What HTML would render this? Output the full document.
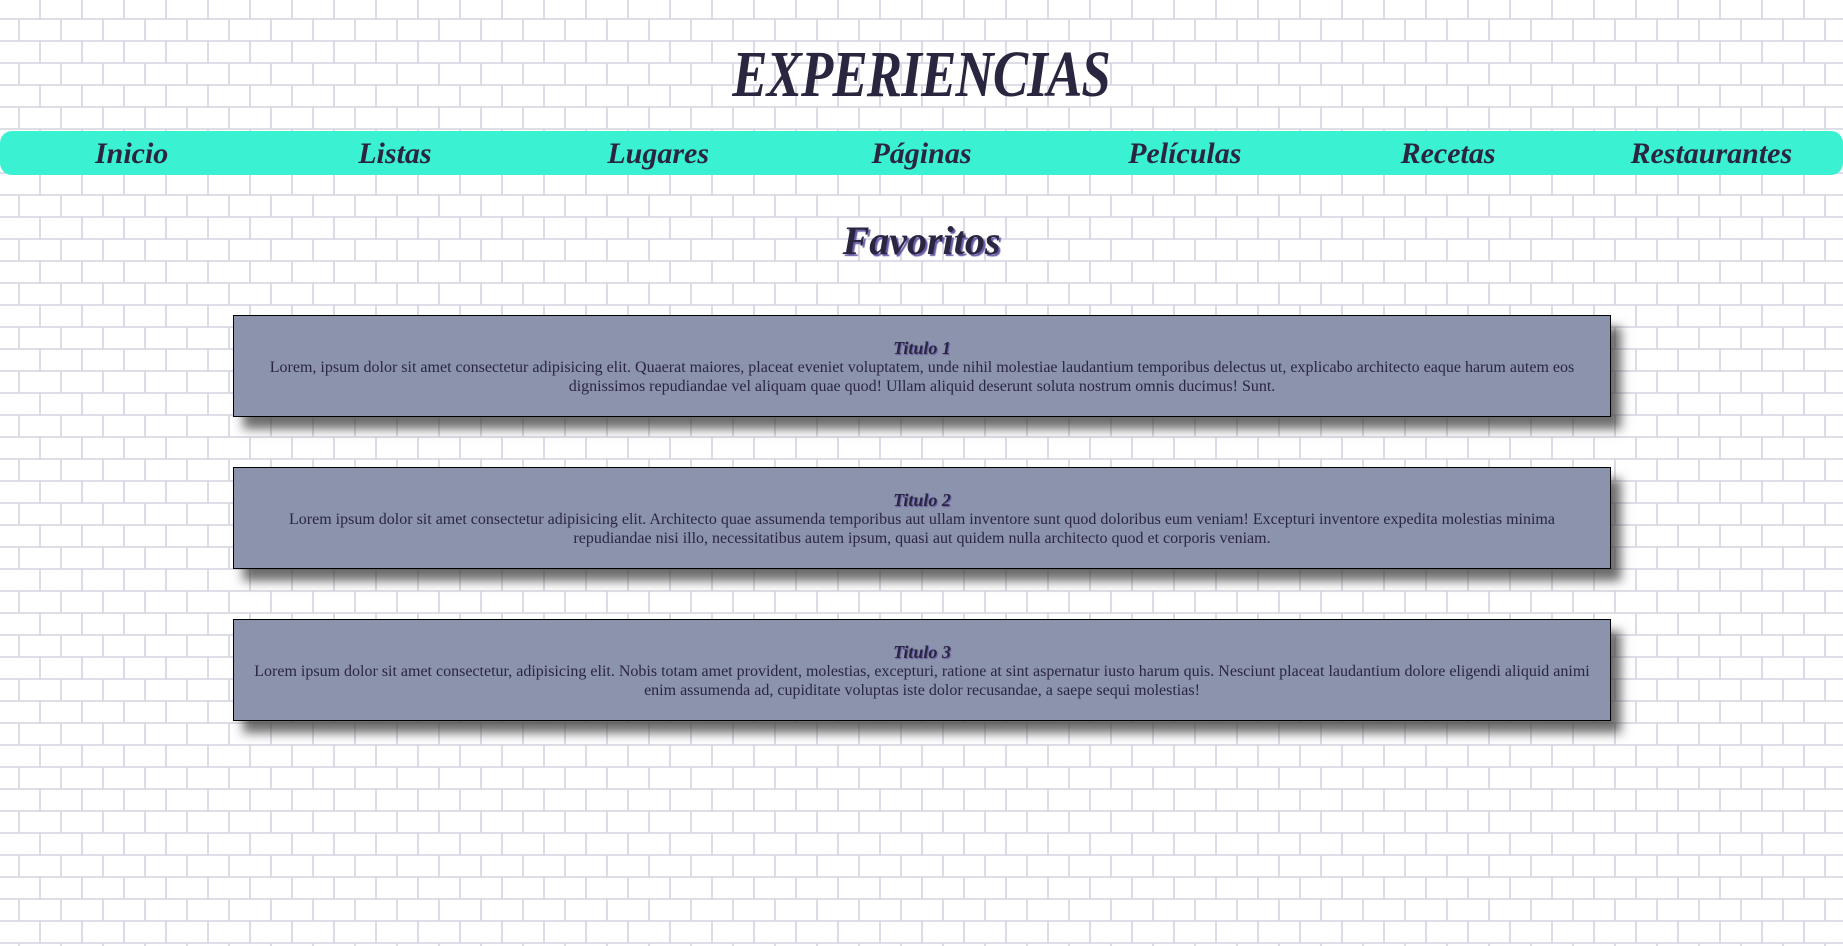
<!DOCTYPE html>
<html><head><meta charset="utf-8"><style>
html,body{margin:0;padding:0;width:1843px;height:946px;overflow:hidden;background:#fff;}
#bg{position:absolute;left:0;top:0;z-index:0}
.wrap{position:relative;z-index:1}
h1{margin:0;position:absolute;top:40px;left:0;width:1843px;text-align:center;font:italic bold 66px/70px "Liberation Serif",serif;color:#2a2640;}
h1 span{display:inline-block;transform:scaleX(0.8);letter-spacing:-1px}
nav{position:absolute;top:131px;left:0;width:1843px;height:44px;background:#3af2d2;border-radius:12px;display:flex}
nav a{flex:1;text-align:center;font:italic bold 30px/46px "Liberation Serif",serif;color:#2a2640;text-decoration:none}
h2{margin:0;position:absolute;top:216px;left:0;width:1843px;text-align:center;font:italic bold 40px/50px "Liberation Serif",serif;color:#2a2640;text-shadow:2px 2px 1px #6a5aa8}
.card{position:absolute;left:233px;width:1378px;height:102px;background:#8c93ad;border:1px solid #000;box-shadow:10px 12px 10px rgba(60,60,60,.75);text-align:center;font:16px/19px "Liberation Serif",serif;color:#2a2640;box-sizing:border-box;padding:22px 16px 0}
.card b{display:block;font:italic bold 18px/20px "Liberation Serif",serif;text-shadow:1px 1px 1px #6a5aa8}
</style></head><body>
<svg id="bg" width="1843" height="946"><defs><pattern id="p" width="42" height="44" patternUnits="userSpaceOnUse">
<g stroke="#d3d4e0" stroke-width="1.6"><line x1="0" y1="19" x2="42" y2="19"/><line x1="0" y1="41" x2="42" y2="41"/><line x1="40" y1="0" x2="40" y2="19"/><line x1="40" y1="41" x2="40" y2="44"/><line x1="19" y1="19" x2="19" y2="41"/></g></pattern></defs>
<rect width="1843" height="946" fill="url(#p)"/></svg>
<div class="wrap">
<h1><span>EXPERIENCIAS</span></h1>
<nav><a>Inicio</a><a>Listas</a><a>Lugares</a><a>Páginas</a><a>Películas</a><a>Recetas</a><a>Restaurantes</a></nav>
<h2>Favoritos</h2>
<div class="card" style="top:315px"><b>Titulo 1</b>Lorem, ipsum dolor sit amet consectetur adipisicing elit. Quaerat maiores, placeat eveniet voluptatem, unde nihil molestiae laudantium temporibus delectus ut, explicabo architecto eaque harum autem eos dignissimos repudiandae vel aliquam quae quod! Ullam aliquid deserunt soluta nostrum omnis ducimus! Sunt.</div>
<div class="card" style="top:467px"><b>Titulo 2</b>Lorem ipsum dolor sit amet consectetur adipisicing elit. Architecto quae assumenda temporibus aut ullam inventore sunt quod doloribus eum veniam! Excepturi inventore expedita molestias minima repudiandae nisi illo, necessitatibus autem ipsum, quasi aut quidem nulla architecto quod et corporis veniam.</div>
<div class="card" style="top:619px"><b>Titulo 3</b>Lorem ipsum dolor sit amet consectetur, adipisicing elit. Nobis totam amet provident, molestias, excepturi, ratione at sint aspernatur iusto harum quis. Nesciunt placeat laudantium dolore eligendi aliquid animi enim assumenda ad, cupiditate voluptas iste dolor recusandae, a saepe sequi molestias!</div>
</div>
</body></html>
